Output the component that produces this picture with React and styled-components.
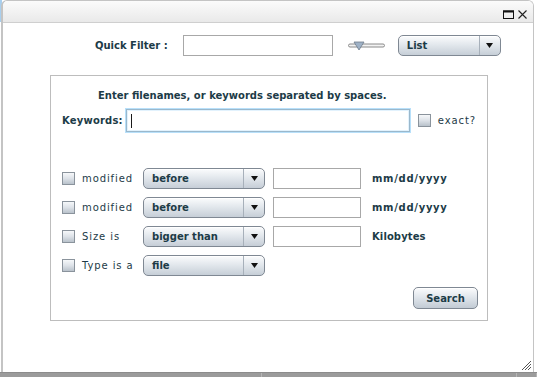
import React from 'react';
import styled, { createGlobalStyle } from 'styled-components';

const GlobalStyle = createGlobalStyle`
  html, body {
    margin: 0;
    padding: 0;
    background: #ffffff;
    font-family: "DejaVu Sans", "Liberation Sans", sans-serif;
  }
`;

const Screen = styled.div`
  width: 537px;
  height: 377px;
  display: flex;
  flex-direction: column;
  overflow: hidden;
  background: #ffffff linear-gradient(#a9cfee, #a9cfee) no-repeat 0 0 / 2px 22px;
`;

const Window = styled.div`
  margin-left: 1px;
  width: 533px;
  height: 373px;
  box-sizing: border-box;
  border: 1px solid #c4c4c4;
  border-left-width: 2px;
  border-bottom: none;
  border-radius: 6px 6px 0 0;
  background: #ffffff;
  display: flex;
  flex-direction: column;
  position: relative;
`;

const TitleBar = styled.div`
  height: 22px;
  border-bottom: 1px solid #cfcfcf;
  border-radius: 5px 5px 0 0;
  background: linear-gradient(#fbfbfb, #e9e9e9);
  display: flex;
  justify-content: flex-end;
  align-items: center;
  gap: 4px;
  padding-right: 6px;
  padding-top: 6px;
  box-sizing: border-box;
`;

const TitleIcon = styled.svg`
  display: block;
`;

const Body = styled.div`
  flex: 1;
  display: flex;
  flex-direction: column;
  padding: 12px 0 0 0;
`;

const TopRow = styled.div`
  display: flex;
  align-items: center;
  height: 21px;
  padding-left: 92px;
`;

const Label = styled.span`
  font-size: ${p => p.size || 10}px;
  font-weight: ${p => (p.bold ? 'bold' : 'normal')};
  letter-spacing: ${p => p.spacing || 0}px;
  color: #1c3b47;
  white-space: nowrap;
`;

const Field = styled.div`
  box-sizing: border-box;
  width: ${p => p.w}px;
  height: ${p => p.h || 21}px;
  border: 1px solid #a8a8a8;
  background: #ffffff;
  margin-left: ${p => p.ml || 0}px;
`;

const FocusField = styled.div`
  box-sizing: border-box;
  width: 284px;
  height: 23px;
  border: 1px solid #9ab8cc;
  box-shadow: 0 0 0 1px #b8e0fa, inset 0 0 0 1px #e2f2fd;
  background: #ffffff;
  margin-left: 3px;
  display: flex;
  align-items: center;
  padding-left: 4px;
`;

const Caret = styled.span`
  width: 1px;
  height: 14px;
  background: #1a1a1a;
`;

const Slider = styled.svg`
  display: block;
  margin-left: 15px;
`;

const Combo = styled.div`
  box-sizing: border-box;
  width: ${p => p.w}px;
  height: ${p => p.h || 21}px;
  margin-left: ${p => p.ml || 0}px;
  border: 1px solid #7f8893;
  border-radius: 5px;
  background: linear-gradient(#fbfcfd 0%, #e3e8ed 45%, #c6ced7 100%);
  box-shadow: inset 0 1px 0 #ffffff;
  display: flex;
  align-items: center;
`;

const ComboText = styled.span`
  flex: 1;
  padding-left: 8px;
  font-size: 10px;
  font-weight: bold;
  color: #1c3b47;
  white-space: nowrap;
`;

const ComboArrow = styled.span`
  width: 21px;
  height: 100%;
  border-left: 1px solid #a7b0ba;
  box-sizing: border-box;
  display: flex;
  align-items: center;
  justify-content: center;
`;

const Panel = styled.div`
  margin: 19px 0 0 47px;
  width: 438px;
  height: 246px;
  box-sizing: border-box;
  border: 1px solid #bdbdbd;
  display: flex;
  flex-direction: column;
`;

const Heading = styled.div`
  padding: 8px 0 0 47px;
  height: 22px;
  box-sizing: border-box;
`;

const KeywordRow = styled.div`
  display: flex;
  align-items: center;
  padding-left: 11px;
  margin-top: 11px;
  height: 23px;
`;

const Check = styled.span`
  box-sizing: border-box;
  width: 13px;
  height: 13px;
  border: 1px solid #8a939c;
  background: linear-gradient(#f6f8fa, #dde2e8 50%, #b9c2cb);
  margin-left: ${p => p.ml || 0}px;
  margin-right: ${p => p.mr || 0}px;
  flex: none;
`;

const FilterGrid = styled.div`
  display: grid;
  grid-template-columns: 20px 61px 130px 99px auto;
  grid-auto-rows: 22px;
  row-gap: 7px;
  align-items: center;
  margin: 35px 0 0 11px;
`;

const Footer = styled.div`
  display: flex;
  justify-content: flex-end;
  padding-right: 9px;
  margin-top: 11px;
`;

const Button = styled.div`
  box-sizing: border-box;
  width: 65px;
  height: 22px;
  border: 1px solid #7f8893;
  border-radius: 5px;
  background: linear-gradient(#fbfcfd 0%, #e1e6ec 45%, #c2cbd4 100%);
  box-shadow: inset 0 1px 0 #ffffff;
  display: flex;
  align-items: center;
  justify-content: center;
  font-size: 10px;
  font-weight: bold;
  color: #1c3b47;
`;

const Grip = styled.svg`
  position: absolute;
  right: 1px;
  bottom: 1px;
`;

const StatusBar = styled.div`
  height: 4px;
  display: flex;
  background: #9b9b9b;
  border-top: 1px solid #8c8c8c;
`;

const StatusCell = styled.div`
  width: ${p => p.w}px;
  border-right: 1px solid #b5b5b5;
  flex: ${p => (p.w ? 'none' : 1)};
`;

const Arrow = () => (
  <svg width="7" height="5" viewBox="0 0 7 5">
    <path d="M0 0h7L3.5 5z" fill="#111" />
  </svg>
);

const filters = [
  { label: 'modified', choice: 'before', unit: 'mm/dd/yyyy', unitSpacing: 0.7 },
  { label: 'modified', choice: 'before', unit: 'mm/dd/yyyy', unitSpacing: 0.7 },
  { label: 'Size is', choice: 'bigger than', unit: 'Kilobytes', unitSpacing: 0.1 },
  { label: 'Type is a', choice: 'file' },
];

export default function App() {
  return (
    <>
      <GlobalStyle />
      <Screen>
        <Window>
          <TitleBar>
            <TitleIcon width="11" height="9" viewBox="0 0 11 9">
              <rect x="0.5" y="1" width="10" height="7.5" fill="none" stroke="#111" strokeWidth="1" />
              <rect x="0" y="0.5" width="11" height="2" fill="#111" />
            </TitleIcon>
            <TitleIcon width="9" height="9" viewBox="0 0 9 9">
              <path d="M0.5 0.5l8 8M8.5 0.5l-8 8" stroke="#222" strokeWidth="1.1" />
            </TitleIcon>
          </TitleBar>
          <Body>
            <TopRow>
              <Label bold>Quick Filter :</Label>
              <Field w={150} ml={15} />
              <Slider width="37" height="12" viewBox="0 0 37 12">
                <rect x="0.5" y="4" width="36" height="3" rx="1.5" fill="#f3f3f3" stroke="#8a8a8a" />
                <path d="M6 2h10l-5 8z" fill="#9eb1c6" stroke="#6e7c8c" strokeWidth="0.8" />
              </Slider>
              <Combo w={103} ml={13}>
                <ComboText>List</ComboText>
                <ComboArrow><Arrow /></ComboArrow>
              </Combo>
            </TopRow>
            <Panel>
              <Heading>
                <Label bold>Enter filenames, or keywords separated by spaces.</Label>
              </Heading>
              <KeywordRow>
                <Label bold spacing={0.2}>Keywords:</Label>
                <FocusField><Caret /></FocusField>
                <Check ml={8} mr={7} />
                <Label spacing={0.9}>exact?</Label>
              </KeywordRow>
              <FilterGrid>
                {filters.map((f, i) => (
                  <React.Fragment key={i}>
                    <Check />
                    <Label spacing={0.9}>{f.label}</Label>
                    <Combo w={122}>
                      <ComboText>{f.choice}</ComboText>
                      <ComboArrow><Arrow /></ComboArrow>
                    </Combo>
                    {f.unit ? <Field w={88} /> : <span />}
                    {f.unit ? <Label bold spacing={f.unitSpacing}>{f.unit}</Label> : <span />}
                  </React.Fragment>
                ))}
              </FilterGrid>
              <Footer>
                <Button>Search</Button>
              </Footer>
            </Panel>
          </Body>
          <Grip width="11" height="11" viewBox="0 0 11 11">
            <path d="M10 1L1 10M10 4L4 10M10 7L7 10" stroke="#555" strokeWidth="1" />
          </Grip>
        </Window>
        <StatusBar>
          <StatusCell w={261} />
          <StatusCell w={254} />
          <StatusCell />
        </StatusBar>
      </Screen>
    </>
  );
}
